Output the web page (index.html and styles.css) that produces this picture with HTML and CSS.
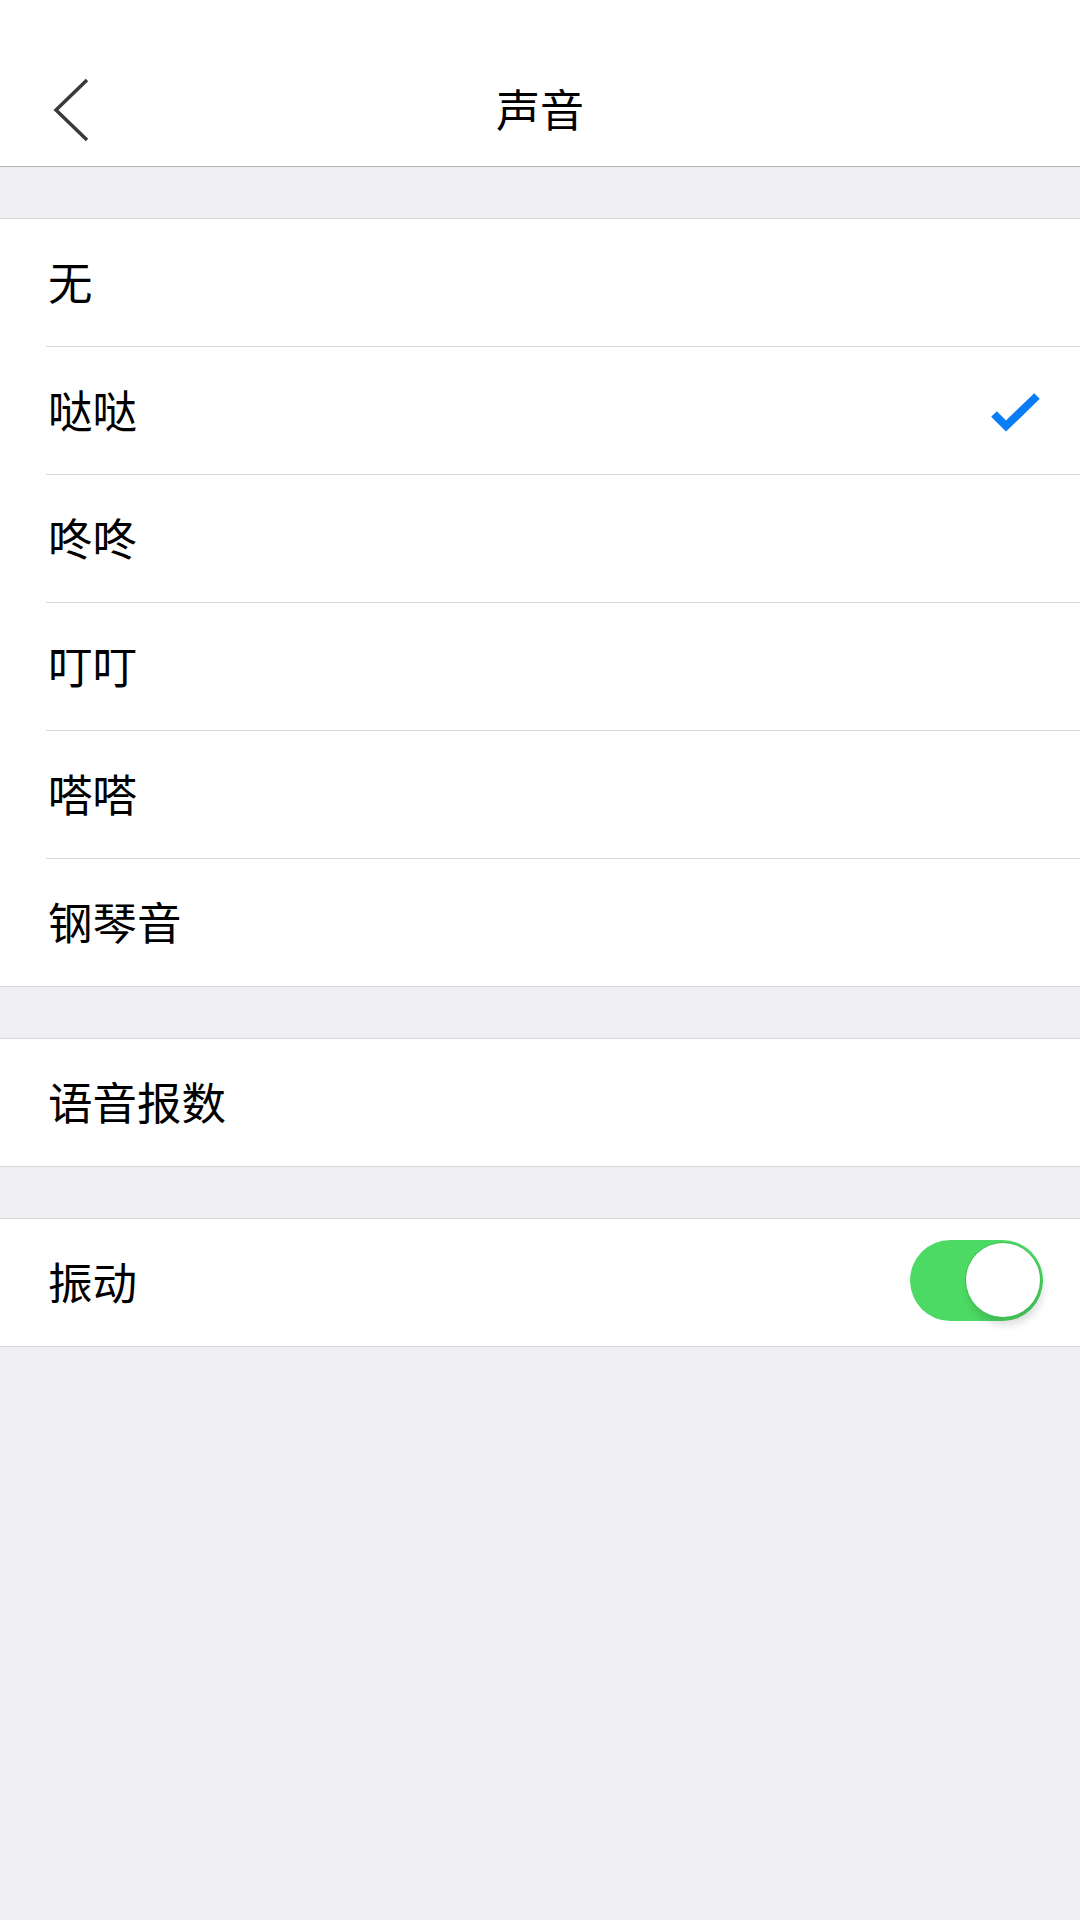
FILE: index.html
```html
<!DOCTYPE html>
<html lang="zh-CN">
<head>
    <meta charset="UTF-8">
    <meta name="viewport" content="width=device-width, initial-scale=1.0">
    <title>声音</title>
    <link rel="stylesheet" href="styles.css">
</head>
<body>
    <header class="nav">
        <div class="nav-left">
            <svg class="back" width="40" height="64" viewBox="0 0 40 64">
                <path d="M35 2 L4 32 L35 62" fill="none" stroke="#3a3a3a" stroke-width="3.5"/>
            </svg>
        </div>
        <h1 class="title">声音</h1>
        <div class="nav-right"></div>
    </header>

    <ul class="group" id="soundList">
        <li class="item">无</li>
        <li class="item selected">哒哒
            <svg class="check" width="56" height="44" viewBox="0 0 56 44">
                <path d="M6 25 L18 37 L49 7" fill="none" stroke="#0a7cf6" stroke-width="8"/>
            </svg>
        </li>
        <li class="item">咚咚</li>
        <li class="item">叮叮</li>
        <li class="item">嗒嗒</li>
        <li class="item">钢琴音</li>
    </ul>

    <ul class="group">
        <li class="item">语音报数</li>
    </ul>

    <ul class="group">
        <li class="item">振动
            <div class="switch on"><span class="knob"></span></div>
        </li>
    </ul>
</body>
</html>
```

FILE: styles.css
```css
body {
    margin: 0;
    background-color: #efeff4;
    font-family: "Noto Sans CJK SC", "Noto Sans", sans-serif;
    color: #000;
}
.nav {
    display: grid;
    grid-template-columns: 1fr auto 1fr;
    align-items: center;
    height: 112px;
    padding-top: 54px;
    background: #fff;
    border-bottom: 1px solid #b2b2b2;
}
.nav-left {
    display: flex;
    align-items: center;
    padding-left: 52px;
}
.back {
    display: block;
}
.title {
    margin: 0 0 5px;
    font-size: 44px;
    font-weight: normal;
    line-height: 1;
}
.group {
    list-style: none;
    margin: 51px 0 0;
    padding: 0;
    background: #fff;
    border-top: 1px solid #d8d8d8;
    border-bottom: 1px solid #d8d8d8;
}
.item {
    display: flex;
    align-items: center;
    justify-content: space-between;
    height: 122px;
    margin-left: 46px;
    padding: 0 37px 5px 2px;
    font-size: 44.5px;
    border-bottom: 1px solid #d8d8d8;
}
.item:last-child {
    border-bottom: none;
}
.check {
    display: block;
    margin: 5px -1px 0 0;
}
.switch {
    display: flex;
    align-items: center;
    justify-content: flex-end;
    box-sizing: border-box;
    width: 133px;
    height: 81px;
    padding: 0 3px;
    border-radius: 41px;
    background: #4cd964;
}
.knob {
    width: 74px;
    height: 74px;
    border-radius: 50%;
    background: #fff;
    box-shadow: 0 0 0 1px #3fbf55, 3px 8px 8px rgba(0, 0, 0, 0.14);
}
```
